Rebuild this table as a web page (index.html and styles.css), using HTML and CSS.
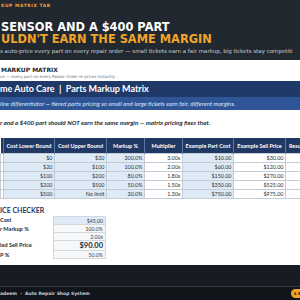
FILE: index.html
```html
<!DOCTYPE html>
<html>
<head>
<meta charset="utf-8">
<link rel="stylesheet" href="styles.css">
</head>
<body>
<div class="page">
  <header class="hero">
    <div class="eyebrow">KUP MATRIX TAB</div>
    <h1 class="headline">
      <span class="line white">SENSOR AND A $400 PART</span>
      <span class="line orange">ULDN'T EARN THE SAME MARGIN</span>
    </h1>
    <p class="sub">s auto-price every part on every repair order — small tickets earn a fair markup, big tickets stay competiti</p>
  </header>

  <section class="sheet">
    <div class="sheet-label">MARKUP MATRIX</div>
    <div class="sheet-note">ce — every part on every Repair Order re-prices instantly.</div>

    <div class="banner">me Auto Care &nbsp;|&nbsp; Parts Markup Matrix</div>
    <div class="tagline">line differentiator — tiered parts pricing so small and large tickets earn fair, different margins.</div>

    <div class="callout">r and a $400 part should NOT earn the same margin — matrix pricing fixes that.</div>

    <table class="matrix">
      <colgroup>
        <col class="c0"><col class="c1"><col class="c2"><col class="c3"><col class="c4"><col class="c5"><col class="c6"><col class="c7">
      </colgroup>
      <thead>
        <tr>
          <th></th><th>Cost Lower Bound</th><th>Cost Upper Bound</th><th>Markup %</th><th>Multiplier</th><th>Example Part Cost</th><th>Example Sell Price</th><th class="clip">Resu</th>
        </tr>
      </thead>
      <tbody>
        <tr><td></td><td class="in">$0</td><td class="in">$20</td><td class="in">200.0%</td><td>3.00x</td><td class="in">$10.00</td><td>$30.00</td><td></td></tr>
        <tr><td></td><td class="in">$20</td><td class="in">$100</td><td class="in">100.0%</td><td>2.00x</td><td class="in">$60.00</td><td>$120.00</td><td></td></tr>
        <tr><td></td><td class="in">$100</td><td class="in">$200</td><td class="in">80.0%</td><td>1.80x</td><td class="in">$150.00</td><td>$270.00</td><td></td></tr>
        <tr><td></td><td class="in">$200</td><td class="in">$500</td><td class="in">50.0%</td><td>1.50x</td><td class="in">$350.00</td><td>$525.00</td><td></td></tr>
        <tr><td></td><td class="in">$500</td><td class="in">No limit</td><td class="in">30.0%</td><td>1.30x</td><td class="in">$750.00</td><td>$975.00</td><td></td></tr>
      </tbody>
    </table>

    <div class="checker">
      <div class="checker-title">ICE CHECKER</div>
      <div class="crow r1"><span class="clabel">Cost</span><span class="cval input">$45.00</span></div>
      <div class="crow"><span class="clabel">r Markup %</span><span class="cval">100.0%</span></div>
      <div class="crow"><span class="clabel"></span><span class="cval">2.00x</span></div>
      <div class="crow big"><span class="clabel">led Sell Price</span><span class="cval strong">$90.00</span></div>
      <div class="crow"><span class="clabel">P %</span><span class="cval">50.0%</span></div>
    </div>
  </section>

  <div class="dark"></div>
  <footer class="footer">
    <span class="foot-text">adeem &nbsp;·&nbsp; Auto Repair Shop System</span>
    <span class="pill">$ B</span>
  </footer>
</div>
</body>
</html>
```

FILE: styles.css
```css
html, body {
  margin: 0;
  padding: 0;
  background: #ffffff;
}
.page {
  width: 300px;
  height: 300px;
  overflow: hidden;
  font-family: "Lato", "Liberation Sans", sans-serif;
  display: flex;
  flex-direction: column;
}
.hero {
  background: #222830;
  height: 60px;
  flex: none;
  box-sizing: border-box;
  padding: 3px 0 0 1px;
  white-space: nowrap;
  overflow: hidden;
}
.eyebrow {
  font-family: "DejaVu Sans", sans-serif;
  font-weight: bold;
  font-size: 4.4px;
  line-height: 6px;
  letter-spacing: 0.6px;
  color: #e9a23b;
}
.headline {
  margin: 12px 0 0 0;
  font-family: "DejaVu Sans", sans-serif;
  font-weight: bold;
  font-size: 11.4px;
  line-height: 12px;
  display: flex;
  flex-direction: column;
}
.line {
  display: block;
  height: 12px;
}
.white { color: #ffffff; }
.orange { color: #f0a429; }
.sub {
  margin: 3px 0 0 -1px;
  font-family: "DejaVu Sans", sans-serif;
  font-size: 5.5px;
  line-height: 7px;
  color: #c5cad1;
}
.sheet {
  flex: 1;
  background: #ffffff;
  white-space: nowrap;
  overflow: hidden;
}
.sheet-label {
  margin-top: 6px;
  padding-left: 1px;
  font-family: "DejaVu Sans", sans-serif;
  font-weight: bold;
  font-size: 6px;
  line-height: 7px;
  color: #1e2630;
}
.sheet-note {
  margin-top: 1px;
  font-family: "DejaVu Sans", sans-serif;
  font-size: 4px;
  line-height: 5px;
  color: #6b7480;
}
.banner {
  margin-top: 2px;
  height: 16px;
  line-height: 16px;
  background: #1f3a68;
  color: #ffffff;
  font-weight: bold;
  font-size: 9px;
}
.tagline {
  height: 13px;
  line-height: 13px;
  background: #2f5597;
  color: #dce6f4;
  font-style: italic;
  font-size: 6.2px;
}
.callout {
  margin-top: 8px;
  height: 10px;
  line-height: 10px;
  font-style: italic;
  font-weight: bold;
  font-size: 6.3px;
  color: #222a33;
}
.matrix {
  margin-top: 10px;
  border-collapse: collapse;
  table-layout: fixed;
  width: 315px;
}
.c0 { width: 3px; }
.c1 { width: 51px; }
.c2 { width: 52px; }
.c3 { width: 38px; }
.c4 { width: 38px; }
.c5 { width: 51px; }
.c6 { width: 52px; }
.c7 { width: 30px; }
.matrix th {
  background: #1f3864;
  color: #ffffff;
  font-weight: bold;
  font-size: 5.5px;
  height: 15px;
  padding: 0;
  border-left: 1px solid #5a77a8;
  text-align: center;
  overflow: hidden;
  white-space: nowrap;
}
.matrix th:first-child { border-left: none; }
.matrix th.clip { text-align: left; padding-left: 3px; }
.matrix td {
  height: 8px;
  padding: 0 1.5px 0 0;
  font-size: 5.4px;
  line-height: 8px;
  color: #2a2f36;
  text-align: right;
  border: 1px solid #c4cbd4;
  background: #ffffff;
}
.matrix td.in { background: #deebf7; }
.checker {
  margin-top: 8px;
  display: flex;
  flex-direction: column;
}
.checker-title {
  font-weight: bold;
  font-size: 7px;
  line-height: 7px;
  color: #1f3864;
  margin-bottom: 2px;
}
.crow {
  display: flex;
  align-items: stretch;
  height: 8px;
}
.crow.r1 { height: 9px; }
.crow.big { height: 10px; }
.clabel {
  width: 53px;
  font-weight: bold;
  font-size: 5.6px;
  line-height: 8px;
  color: #222a33;
}
.cval {
  width: 53px;
  box-sizing: border-box;
  border: 1px solid #d3d8de;
  margin-top: -1px;
  background: #f6f7f9;
  font-size: 5.2px;
  line-height: 8px;
  text-align: right;
  padding-right: 2px;
  color: #3a4048;
}
.r1 .cval { margin-top: 0; }
.cval.input { background: #deebf7; }
.cval.strong {
  line-height: 10px;
  font-size: 7.5px;
  font-weight: bold;
  color: #1f2b3c;
}
.dark {
  flex: none;
  height: 21px;
  background: #181c22;
  border-bottom: 1px solid #333a43;
}
.footer {
  flex: none;
  height: 13px;
  background: #11151a;
  display: flex;
  align-items: center;
  justify-content: space-between;
}
.foot-text {
  font-family: "DejaVu Sans", sans-serif;
  font-weight: bold;
  font-size: 4.5px;
  color: #c8ccd2;
}
.pill {
  background: #f0a429;
  color: #3a2a10;
  font-family: "DejaVu Sans", sans-serif;
  font-weight: bold;
  font-size: 4px;
  height: 9px;
  line-height: 9px;
  padding: 0 3px;
  border-radius: 5px;
  margin-right: -4px;
}
```
